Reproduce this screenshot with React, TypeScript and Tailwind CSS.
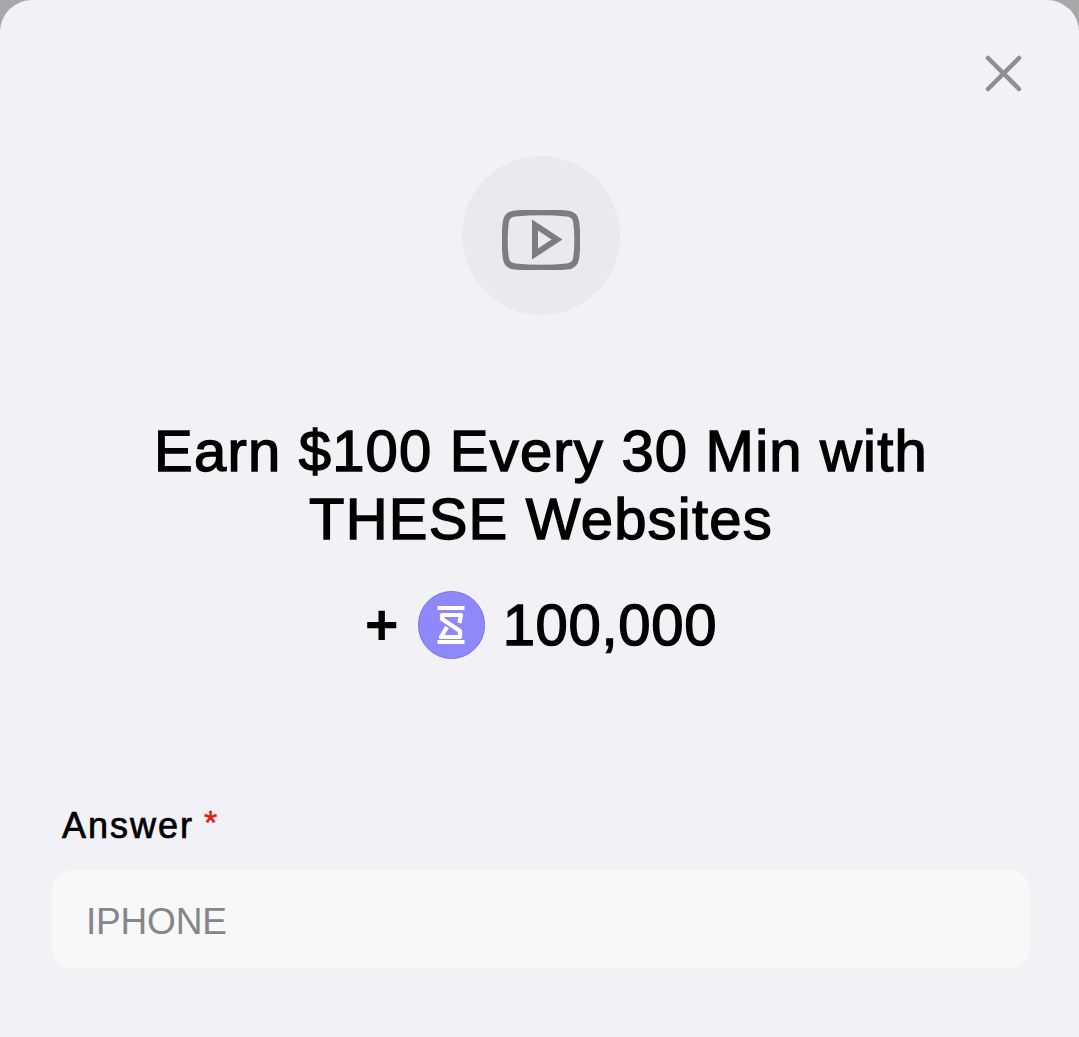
export default function App() {
  return (
    <div className="h-[1037px] w-[1079px] overflow-hidden bg-[#a8a8aa] font-['Liberation_Sans',Arial,sans-serif]">
      <div className="flex h-[1037px] flex-col rounded-t-[32px] bg-[#f1f1f6] pl-[52px] pr-[49px]">
        <div className="flex h-[156px] shrink-0 justify-end pr-[8px] pt-[55px]">
          <svg width="37" height="37" viewBox="0 0 37 37" fill="none" stroke="#8e8e93" strokeWidth="4.5" strokeLinecap="round">
            <path d="M3 3 L34 34 M34 3 L3 34" />
          </svg>
        </div>
        <div className="flex shrink-0 justify-center">
          <div className="flex h-[159px] w-[158px] items-center justify-center rounded-full bg-[#e9e9ef] pt-[8px]">
            <svg width="78" height="60" viewBox="0 0 78 60" fill="none">
              <path d="M13 3.5 C30 1.8 48 1.8 65 3.5 C70.5 4 73.5 7 74.2 12 C75.6 23 75.6 37 74.2 48 C73.5 53 70.5 56 65 56.5 C48 58.2 30 58.2 13 56.5 C7.5 56 4.5 53 3.8 48 C2.4 37 2.4 23 3.8 12 C4.5 7 7.5 4 13 3.5 Z" stroke="#7c7c82" strokeWidth="6" />
              <path d="M33 15 L55 29.5 L33 44 Z" stroke="#7c7c82" strokeWidth="6" strokeLinejoin="miter" />
            </svg>
          </div>
        </div>
        <h1 className="mt-[102px] text-center text-[58px] font-normal leading-[68px] tracking-[1.2px] text-black [-webkit-text-stroke:1.4px_black]">
          Earn $100 Every 30 Min with
          <br />
          THESE Websites
        </h1>
        <div className="mt-[38px] flex h-[68px] items-center justify-center">
          <span className="mr-[19px] text-[58px] font-bold leading-[68px] text-black">+</span>
          <div className="-mt-px flex h-[68px] w-[67px] items-center justify-center rounded-full border border-[#7b72ee] bg-[#8f88fb]">
            <svg width="28" height="38" viewBox="0 0 28 38" fill="none" stroke="#ffffff">
              <path d="M0.5 2 H27.5 M0.5 36 H27.5" strokeWidth="4" />
              <path d="M22.5 17 L24 9 H5 V13 L23 25 V31 H4 L10 21" strokeWidth="4.2" strokeLinejoin="round" />
            </svg>
          </div>
          <span className="ml-[18px] text-[58px] leading-[68px] tracking-[0.7px] text-black [-webkit-text-stroke:1.4px_black]">100,000</span>
        </div>
        <label className="mt-[146px] block pl-[10px] text-[36px] leading-[42px] tracking-[2px] text-black [-webkit-text-stroke:0.7px_black]">
          Answer <span className="relative left-[-2px] top-[-4px] text-[34px] text-[#e0200f] [-webkit-text-stroke:0.5px_#e0200f]">*</span>
        </label>
        <div className="mt-[23px] flex h-[98px] shrink-0 items-center rounded-[20px] bg-[#f8f8f9] pl-[34px] pt-[5px] text-[37px] tracking-[-0.2px] text-[#85858b]">
          IPHONE
        </div>
      </div>
    </div>
  );
}
